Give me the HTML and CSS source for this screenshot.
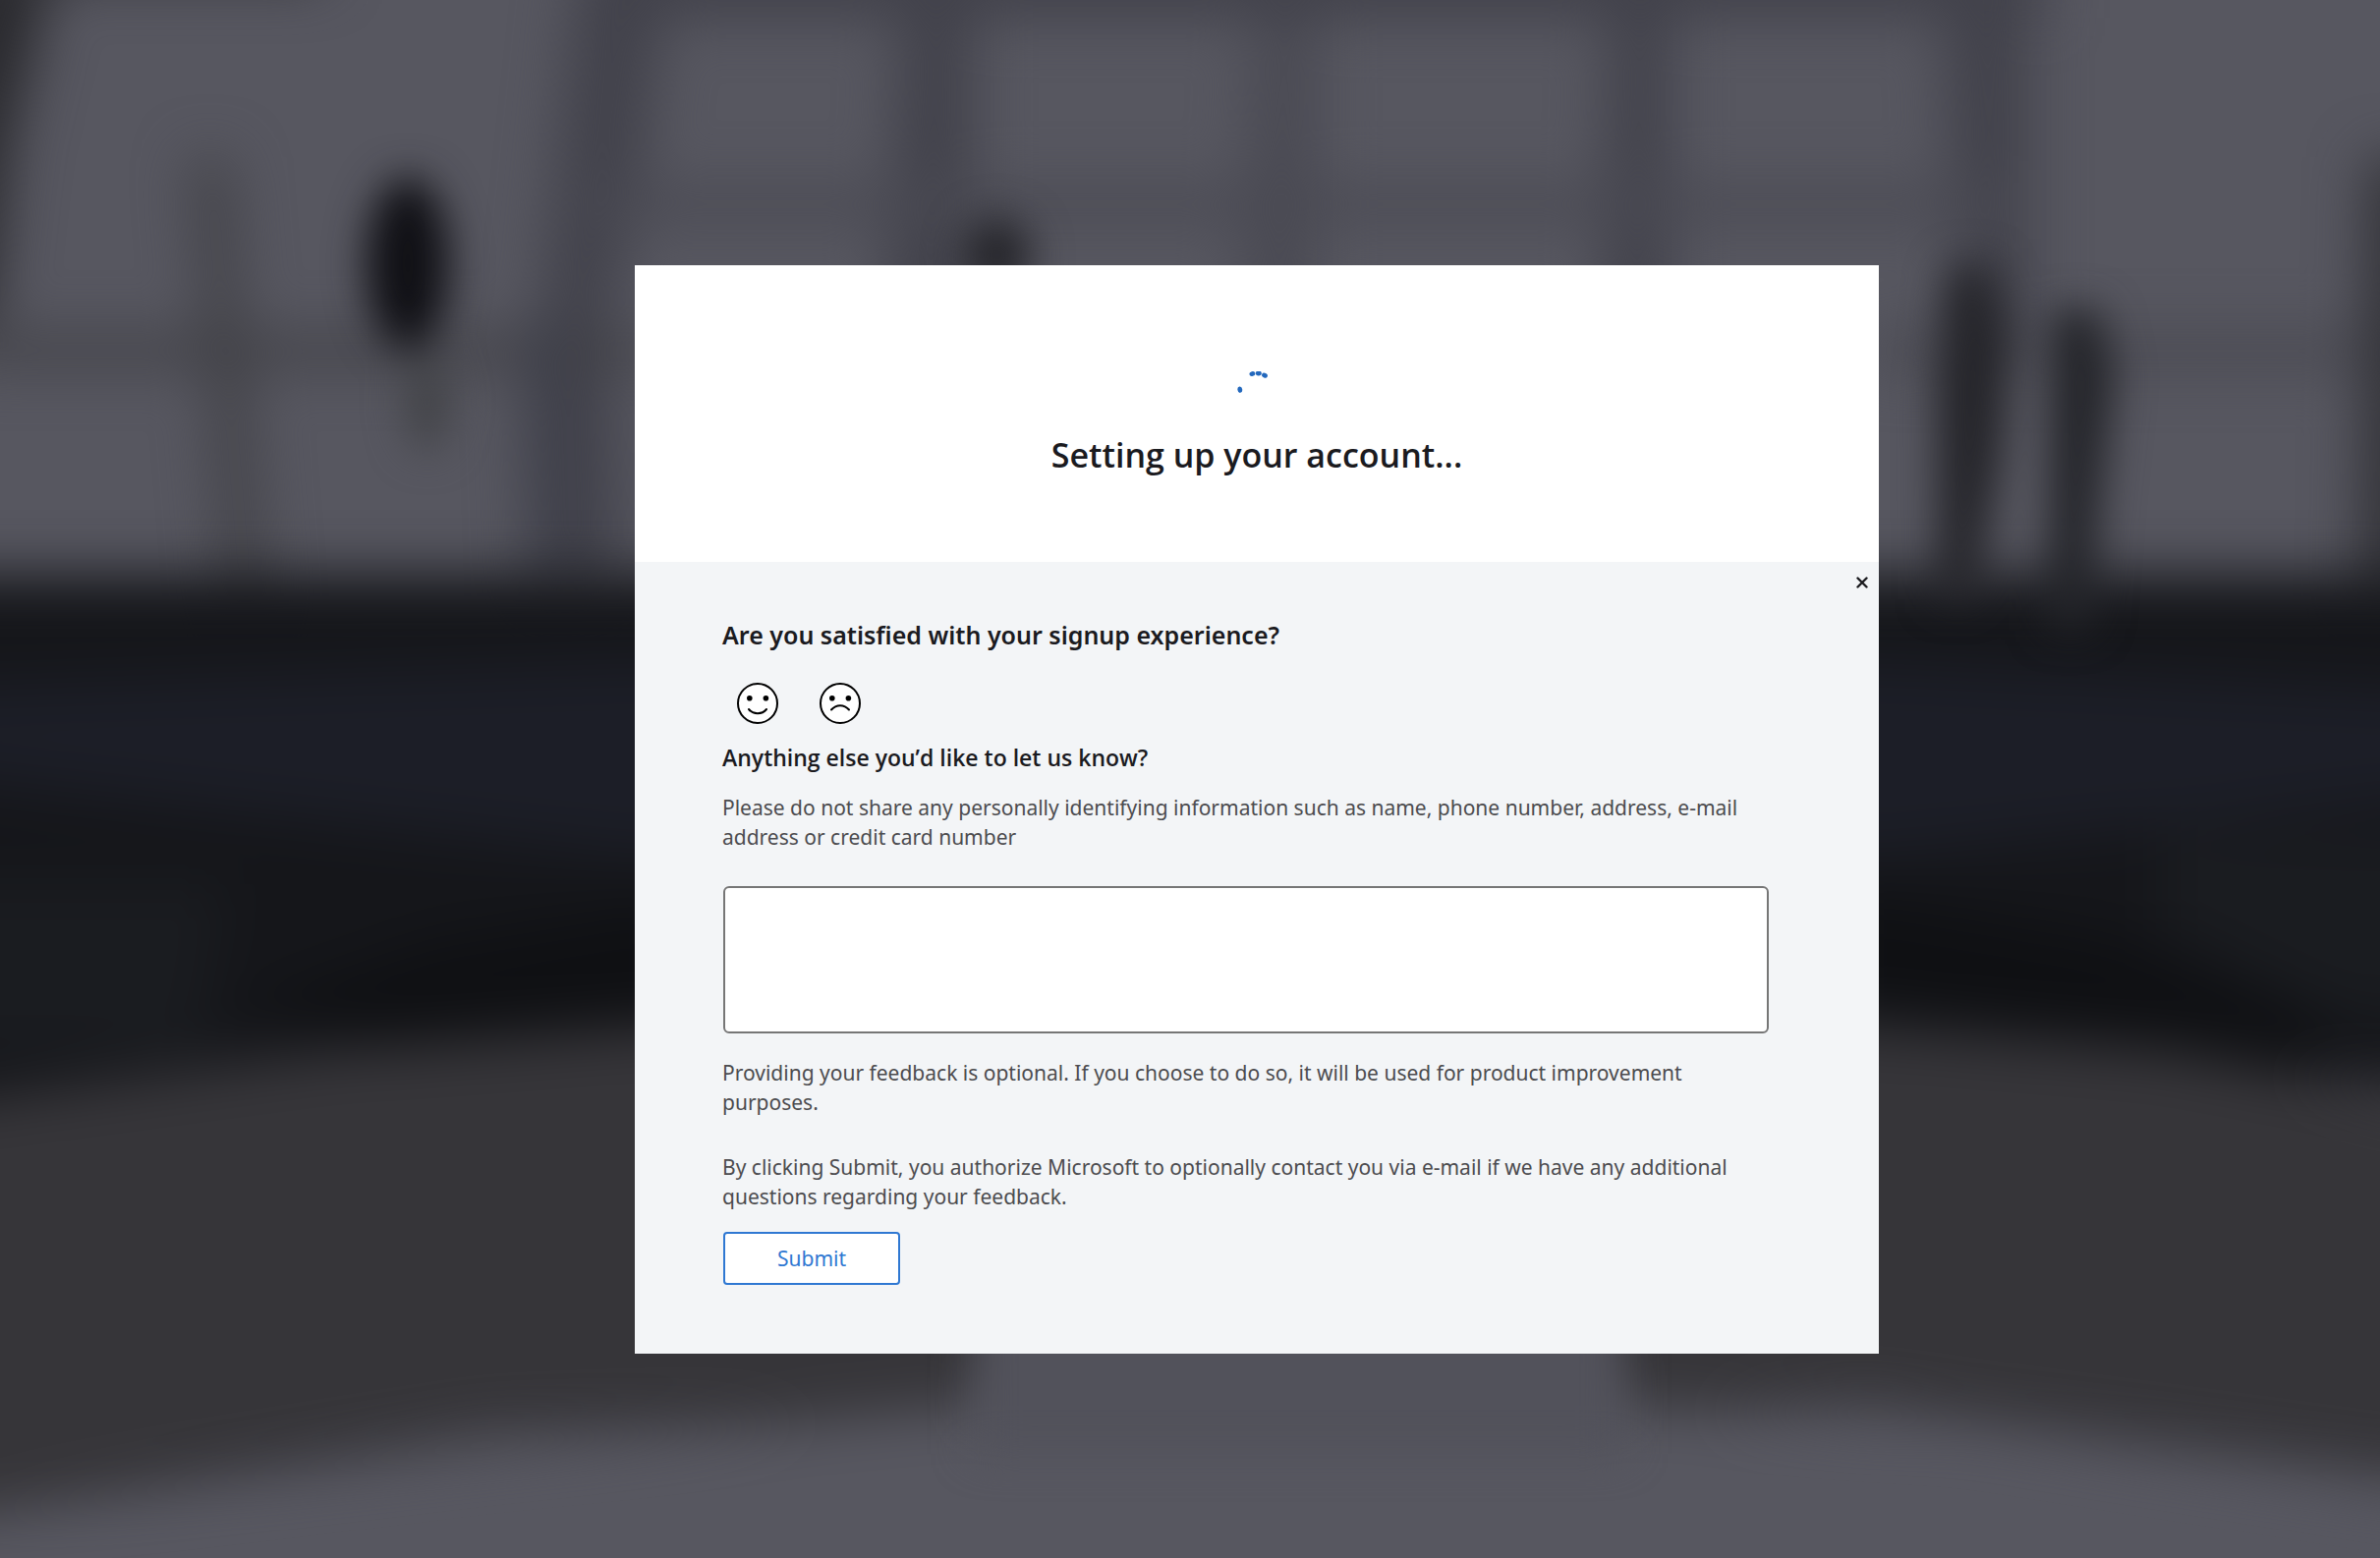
FILE: index.html
```html
<!DOCTYPE html>
<html lang="en">
<head>
<meta charset="utf-8">
<meta name="viewport" content="width=device-width, initial-scale=1">
<title>Setting up your account</title>
<link rel="stylesheet" href="styles.css">
</head>
<body>
<svg class="backdrop" viewBox="0 0 2422 1586" preserveAspectRatio="none" aria-hidden="true">
  <defs>
    <filter id="soft" x="-20%" y="-20%" width="140%" height="140%" color-interpolation-filters="sRGB"><feGaussianBlur stdDeviation="28"/></filter>
    <filter id="near" x="-50%" y="-50%" width="200%" height="200%" color-interpolation-filters="sRGB"><feGaussianBlur stdDeviation="20"/></filter>
  </defs>
  <rect width="2422" height="1586" fill="#575760"/>
  <!-- window frames -->
  <g filter="url(#soft)" fill="#42424b">
    <path d="M-60-60H60L10 150-10 330H-60z" fill="#29292d"/>
    <path d="M590-40h90l-30 240-30 120 10 280h-90l10-270z"/>
    <path d="M920-40h70v380h-90z"/>
    <path d="M1280-40h60v380h-80z" fill="#4a4a53"/>
    <path d="M1640-40h60v380h-70z"/>
    <path d="M1975-40h90v400h-70z"/>
    <path d="M600-60h1480V18H600z"/>
    <path d="M600 190h1450v36H600z" fill="#4a4a53"/>
    <path d="M-40 342H660v30H-40z" fill="#404045"/>
    <path d="M1900 340h560v34h-560z" fill="#494951"/>
    <path d="M195 160h36l20 240 20 240h-36z" fill="#404045"/>
    <path d="M530 330h50v280h-40z" fill="#3f404a"/>
    <path d="M2410 160h70v460h-80z" fill="#333338"/>
    <path d="M-60-60H330V-22H-60z" fill="#303035"/>
  </g>
  <!-- water and shore -->
  <g filter="url(#soft)">
    <path d="M-80 586H2502V1110L1912 1050H646L-80 1130z" fill="#15161a"/>
    <path d="M-80 700L646 675H1912L2502 705V810L1912 870H646L-80 790z" fill="#1c1e27"/>
    <path d="M-80 900H230L200 1070H-80z" fill="#1a1c20"/>
    <path d="M2200 850H2502V1030H2380L2200 940z" fill="#1a1c20"/>
    <path d="M240 1030L440 960 680 920V1050L450 1075z" fill="#0f1013"/>
    <path d="M1880 910L2150 955 2380 1050 2330 1090 1880 1020z" fill="#0f1013"/>
    <path d="M-80 1125L350 1068 700 1042H1850L2200 1068 2502 1125V1510L1900 1430 1640 1440V1400H1000V1440L500 1460-80 1550z" fill="#363539"/>
    <path d="M-80 1550L500 1478 1000 1430H1650L2000 1453 2502 1530V1660H-80z" fill="#575760"/>
  </g>
  <!-- pier and people -->
  <g filter="url(#near)">
    <path d="M992 1330H1652V1480H992z" fill="#52525b"/>
    <ellipse cx="415" cy="268" rx="42" ry="88" fill="#101015"/>
    <ellipse cx="435" cy="410" rx="22" ry="50" fill="#424347"/>
    <ellipse cx="1015" cy="260" rx="34" ry="38" fill="#242429"/>
    <path d="M1985 270h40l20 80-8 110-28 150h-36l-2-220z" fill="#25252a"/>
    <path d="M2090 315h45l16 65-14 130-10 130h-42l2-230z" fill="#24252a"/>
  </g>
</svg>
<main class="page">
  <section class="card">
    <header class="status">
      <svg class="spinner" viewBox="0 0 40 40" aria-hidden="true">
        <ellipse cx="15.4" cy="2.5" rx="3" ry="2.4" transform="rotate(-14 15.4 2.5)"/>
        <ellipse cx="21.8" cy="2" rx="3" ry="2.4"/>
        <ellipse cx="28" cy="4.1" rx="3" ry="2.4" transform="rotate(26 28 4.1)"/>
        <ellipse cx="2.8" cy="18.7" rx="2.4" ry="3.2" transform="rotate(-8 2.8 18.7)"/>
      </svg>
      <h1 class="title">Setting up your account...</h1>
    </header>
    <form class="feedback">
      <button class="close" type="button" aria-label="Close">
        <svg class="close-icon" viewBox="0 0 12 12" aria-hidden="true"><path d="M1.5 1.5l9 9M10.5 1.5l-9 9"/></svg>
      </button>
      <h2 class="question">Are you satisfied with your signup experience?</h2>
      <div class="faces">
        <button class="face" type="button" aria-label="Satisfied">
          <svg class="face-icon" viewBox="0 0 42 42" aria-hidden="true">
            <circle class="face-line face-fill" cx="21" cy="21" r="20"/>
            <circle cx="12.8" cy="15.8" r="2.8"/><circle cx="29.4" cy="15.8" r="2.8"/>
            <path class="face-line" d="M12 27c4.6 5.6 13.4 5.6 18 0"/>
          </svg>
        </button>
        <button class="face" type="button" aria-label="Dissatisfied">
          <svg class="face-icon" viewBox="0 0 42 42" aria-hidden="true">
            <circle class="face-line face-fill" cx="21" cy="21" r="20"/>
            <circle cx="12.8" cy="15.8" r="2.8"/><circle cx="29.4" cy="15.8" r="2.8"/>
            <path class="face-line" d="M12 27.5c5-5.800 13-5.800 18 0"/>
          </svg>
        </button>
      </div>
      <label class="label" for="comment">Anything else you’d like to let us know?</label>
      <p class="text">Please do not share any personally identifying information such as name, phone number, address, e-mail address or credit card number</p>
      <textarea class="comment" id="comment"></textarea>
      <p class="text">Providing your feedback is optional. If you choose to do so, it will be used for product improvement purposes.</p>
      <p class="text consent">By clicking Submit, you authorize Microsoft to optionally contact you via e-mail if we have any additional questions regarding your feedback.</p>
      <button class="submit" type="submit">Submit</button>
    </form>
  </section>
</main>
</body>
</html>
```

FILE: styles.css
```css
* {
  box-sizing: border-box;
}

body {
  margin: 0;
  background: #363539;
  color: #1b1b1f;
  font-family: "Segoe UI", "Noto Sans", "Open Sans", sans-serif;
}

.backdrop {
  position: fixed;
  inset: 0;
  z-index: -1;
  width: 100%;
  height: 100%;
}

.page {
  display: flex;
  align-items: center;
  justify-content: center;
  min-height: 100vh;
  padding: 62px 0 0 136px;
}

.card {
  width: 100%;
  max-width: 1266px;
  background: #fff;
}

.status {
  display: flex;
  flex-direction: column;
  align-items: center;
  gap: 19px;
  padding: 108px 40px 83px;
}

.spinner {
  width: 40px;
  height: 40px;
  fill: #2368bd;
}

.title {
  margin: 0;
  font-family: "Segoe UI", "Open Sans", sans-serif;
  font-size: 34px;
  font-weight: 600;
  line-height: 52px;
}

.feedback {
  position: relative;
  display: flex;
  flex-direction: column;
  padding: 55px 112px 70px 89px;
  background: #f3f5f7;
}

.close {
  position: absolute;
  top: 8px;
  right: 4px;
  display: flex;
  align-items: center;
  justify-content: center;
  width: 26px;
  height: 26px;
  padding: 0;
  border: 0;
  background: none;
}

.close-icon {
  width: 12px;
  height: 12px;
  fill: none;
  stroke: #1b1b1f;
  stroke-width: 2.4;
  stroke-linecap: round;
}

.question {
  margin: 0;
  font-size: 25px;
  font-weight: 600;
  line-height: 38px;
}

.faces {
  display: flex;
  gap: 42px;
  margin: 30px 0 15px 15px;
}

.face {
  width: 42px;
  height: 42px;
  padding: 0;
  border: 0;
  background: none;
}

.face-icon {
  display: block;
  width: 42px;
  height: 42px;
}

.face-line {
  fill: none;
  stroke: #000;
  stroke-width: 2;
  stroke-linecap: round;
}

.face-fill {
  fill: #fff;
}

.label {
  margin-bottom: 3px;
  font-family: "Segoe UI", "Open Sans", sans-serif;
  font-size: 23px;
  font-weight: 600;
  line-height: 38px;
}

.text {
  margin: 14px 0 0;
  color: #4c4c4f;
  font-size: 21px;
  line-height: 30px;
}

.comment {
  height: 150px;
  margin: 35px 0 11px 1px;
  padding: 10px;
  border: 2px solid #767676;
  border-radius: 6px;
  background: #fff;
  font: inherit;
  font-size: 21px;
  resize: none;
}

.consent {
  margin-top: 36px;
}

.submit {
  align-self: flex-start;
  width: 180px;
  height: 54px;
  margin: 21px 0 0 1px;
  padding: 0;
  border: 2px solid #2f78d2;
  border-radius: 4px;
  background: #fff;
  color: #2f78d2;
  font: inherit;
  font-size: 21px;
}
```
